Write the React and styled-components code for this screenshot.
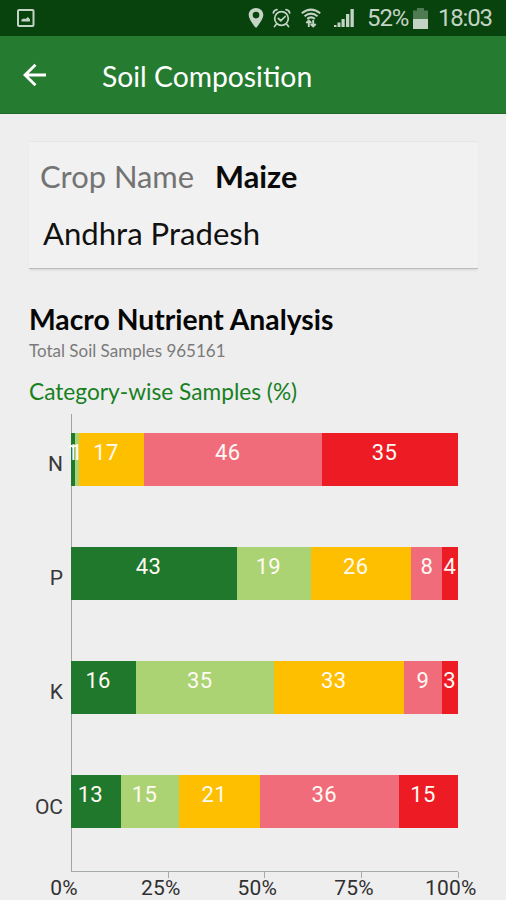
import React from "react";
import styled, { createGlobalStyle } from "styled-components";

const GlobalStyle = createGlobalStyle`
  * { box-sizing: border-box; }
  html, body { margin: 0; background: #eeeeee; }
  body { overflow: hidden; }
`;

const Screen = styled.div`
  width: 506px;
  height: 900px;
  overflow: hidden;
  background: #eeeeee;
  font-family: Lato, "Liberation Sans", sans-serif;
  color: #111;
`;

const StatusBar = styled.header`
  height: 36px;
  background: #08430e;
  color: #c3d3c4;
  display: flex;
  align-items: center;
  justify-content: space-between;
  padding: 0 13px 0 16px;
  font-family: Roboto, sans-serif;
`;

const StatusIcons = styled.div`
  display: flex;
  align-items: center;
`;

const StatusGlyph = styled.svg`
  display: block;
  flex: none;
  margin-right: ${(p) => p.$gap || 0}px;
`;

const StatusText = styled.span`
  display: block;
  width: ${(p) => p.$w}px;
  font-size: 24px;
  line-height: 36px;
  letter-spacing: ${(p) => p.$ls || 0}px;
  white-space: nowrap;
`;

const Toolbar = styled.div`
  height: 78px;
  background: #257b30;
  border-bottom: 1px solid #1f6c29;
  display: flex;
  align-items: center;
  padding: 1px 0 0 22px;
`;

const BackIcon = styled.svg`
  display: block;
  margin-right: 55px;
`;

const Title = styled.h1`
  margin: 0;
  padding-top: 2px;
  font-size: 28.3px;
  font-weight: 400;
  line-height: 36px;
  color: #fff;
  white-space: nowrap;
`;

const Card = styled.section`
  margin: 28px 28px 0 29px;
  height: 126px;
  padding: 15px 12px 0 11px;
  background: #f1f1f1;
  box-shadow: 0 -1px 0 #e6e6e6, 0 1px 0 #bcbcbc, 0 3px 2px -1px #d4d4d4;
  font-size: 30.9px;
  line-height: 40px;
`;

const CropRow = styled.div`
  display: flex;
  gap: 21px;
  white-space: nowrap;
`;

const CropLabel = styled.span`
  color: #737373;
`;

const CropValue = styled.strong`
  font-size: 30.7px;
  line-height: 39px;
  font-weight: 700;
  color: #0a0a0a;
`;

const Region = styled.div`
  margin: 16px 0 0 3px;
  font-size: 31.1px;
  white-space: nowrap;
`;

const Heading = styled.h2`
  margin: 34px 0 0 29px;
  font-size: 28.3px;
  font-weight: 700;
  line-height: 34px;
  color: #060606;
  white-space: nowrap;
`;

const Total = styled.p`
  margin: 4px 0 0 29px;
  font-size: 17px;
  line-height: 22px;
  color: #7a7a7a;
  white-space: nowrap;
`;

const Subtitle = styled.h3`
  margin: 15px 0 0 29px;
  font-size: 22.7px;
  font-weight: 400;
  line-height: 30px;
  color: #18801f;
  white-space: nowrap;
`;

const Chart = styled.div`
  display: grid;
  grid-template-columns: 71px 387px;
  grid-template-rows: 458px 28px;
  margin-top: 7px;
  font-family: Roboto, sans-serif;
`;

const Categories = styled.div`
  padding-top: 34px;
`;

const Category = styled.div`
  height: 114.2px;
  padding-right: 8px;
  line-height: 32px;
  font-size: 21px;
  color: #383838;
  text-align: right;
`;

const Plot = styled.div`
  padding-top: 19px;
  border-bottom: 1px solid #a5abaa;
  background: linear-gradient(#a3a3a3, #a3a3a3) 0 0 / 1px 100% no-repeat;
`;

const Bar = styled.div`
  display: flex;
  height: 53px;
  margin-bottom: 61.1px;
`;

const Segment = styled.div`
  flex: none;
  display: flex;
  justify-content: center;
  width: ${(p) => p.$w}px;
  padding-top: 7px;
  background: ${(p) => p.$color};
`;

const Value = styled.span`
  flex: none;
  margin-right: ${(p) => (p.$wide ? 11 : 0)}px;
  font-size: 22px;
  line-height: 26px;
  letter-spacing: 0.3px;
  color: #fffaf4;
`;

const Axis = styled.div`
  grid-column: 2;
  display: flex;
  margin-right: -40px;
`;

const Tick = styled.div`
  flex: none;
  width: 96.7px;
  font-size: 21px;
  line-height: 26px;
  padding-top: 3px;
  color: #303030;
  background: linear-gradient(#a5abaa, #a5abaa) 0 0 / 1px ${(p) => (p.$first ? 0 : 6)}px no-repeat;
`;

const TickLabel = styled.span`
  display: block;
  width: 80px;
  margin-left: -47px;
  text-align: center;
  letter-spacing: 0.2px;
`;

const COLORS = ["#1f782b", "#abd374", "#febf00", "#f16c7b", "#ed1c24"];
const ROWS = [
  { name: "N", values: [1, 1, 17, 46, 35], widths: [3.7, 4, 65.7, 177.8, 135.5] },
  { name: "P", values: [43, 19, 26, 8, 4], widths: [165.8, 74, 100.7, 30.5, 15.7] },
  { name: "K", values: [16, 35, 33, 9, 3], widths: [65.2, 138, 130, 37.5, 16] },
  { name: "OC", values: [13, 15, 21, 36, 15], widths: [49.7, 58.6, 81, 139, 58.4] },
];

export default function App() {
  return (
    <Screen>
      <GlobalStyle />
      <StatusBar>
        <StatusGlyph width="19" height="19" viewBox="0 0 19 19">
          <rect x="2" y="1" width="15.5" height="16" rx="1" fill="none" stroke="#c3d3c4" strokeWidth="2" />
          <path d="M5.500 12.500V10.500l2.500-1 1.500.5L12 8l2 2.500v2z" fill="#c3d3c4" />
        </StatusGlyph>
        <StatusIcons>
          <StatusGlyph $gap={8} width="16" height="20" viewBox="0 0 16 20">
            <path fillRule="evenodd" d="M8 0C3.8 0 .7 3 .7 7c0 4.700 7.300 13 7.300 13s7.300-8.300 7.300-13c0-4-3.100-7-7.300-7zM8 3.800a3.300 3.300 0 1 1 0 6.600 3.300 3.300 0 0 1 0-6.600z" fill="#c3d3c4" />
          </StatusGlyph>
          <StatusGlyph $gap={10} width="19" height="20" viewBox="0 0 19 20" fill="none" stroke="#c3d3c4" strokeWidth="1.7" strokeLinecap="round">
            <circle cx="9.500" cy="10.500" r="6.800" />
            <path d="M1.300 5Q2 2 5 1.700M17.700 5Q17 2 14 1.700M4.500 16l-2 2.500M14.500 16l2 2.500M6.300 10.300l2.500 2.400 4.400-4.200" />
          </StatusGlyph>
          <StatusGlyph $gap={13} width="20" height="20" viewBox="0 0 20 20" fill="none" stroke="#c3d3c4" strokeWidth="2.100">
            <path d="M.8 5.300Q10-2 19.200 5.300M3.500 8.200Q10 3 16.500 8.200M6.200 10.800Q10 8 13.800 10.800" />
            <path d="M7.800 12.500v6.500M12.200 12v6.500M5.300 15l2.500-2.500 2.500 2.500M9.700 16l2.500 2.500 2.500-2.500" strokeWidth="1.900" />
          </StatusGlyph>
          <StatusGlyph $gap={13} width="20" height="20" viewBox="0 0 20 20" fill="#c3d3c4">
            <path d="M0 17h2.500v2H0zM3.500 14.500H6.500V19H3.500zM7.500 11h3.200v8H7.500zM12 6h3.300v13H12zM16.500 1h3.300v18h-3.300z" />
          </StatusGlyph>
          <StatusText $w={46} $ls={-1.1}>52%</StatusText>
          <StatusGlyph $gap={10} width="15" height="21" viewBox="0 0 15 21">
            <path d="M4 0h7v2.500h4v18.500H0V2.500h4z" fill="#4f7b53" />
            <path d="M0 11h15v10H0z" fill="#c3d3c4" />
          </StatusGlyph>
          <StatusText $w={55} $ls={-1.2}>18:03</StatusText>
        </StatusIcons>
      </StatusBar>
      <Toolbar>
        <BackIcon width="25" height="24" viewBox="0 0 25 24" fill="none" stroke="#fff" strokeWidth="2.800">
          <path d="M24 12H3M13.500 1.800L3 12l10.500 10.200" />
        </BackIcon>
        <Title>Soil Composition</Title>
      </Toolbar>
      <Card>
        <CropRow>
          <CropLabel>Crop Name</CropLabel>
          <CropValue>Maize</CropValue>
        </CropRow>
        <Region>Andhra Pradesh</Region>
      </Card>
      <Heading>Macro Nutrient Analysis</Heading>
      <Total>Total Soil Samples 965161</Total>
      <Subtitle>Category-wise Samples (%)</Subtitle>
      <Chart>
        <Categories>
          {ROWS.map((row) => (
            <Category key={row.name}>{row.name}</Category>
          ))}
        </Categories>
        <Plot>
          {ROWS.map((row) => (
            <Bar key={row.name}>
              {row.values.map((value, i) => (
                <Segment key={i} $w={row.widths[i]} $color={COLORS[i]}>
                  <Value $wide={value > 9}>{value}</Value>
                </Segment>
              ))}
            </Bar>
          ))}
        </Plot>
        <Axis>
          {["0%", "25%", "50%", "75%", "100%"].map((label, i) => (
            <Tick key={label} $first={i === 0}>
              <TickLabel>{label}</TickLabel>
            </Tick>
          ))}
        </Axis>
      </Chart>
    </Screen>
  );
}
